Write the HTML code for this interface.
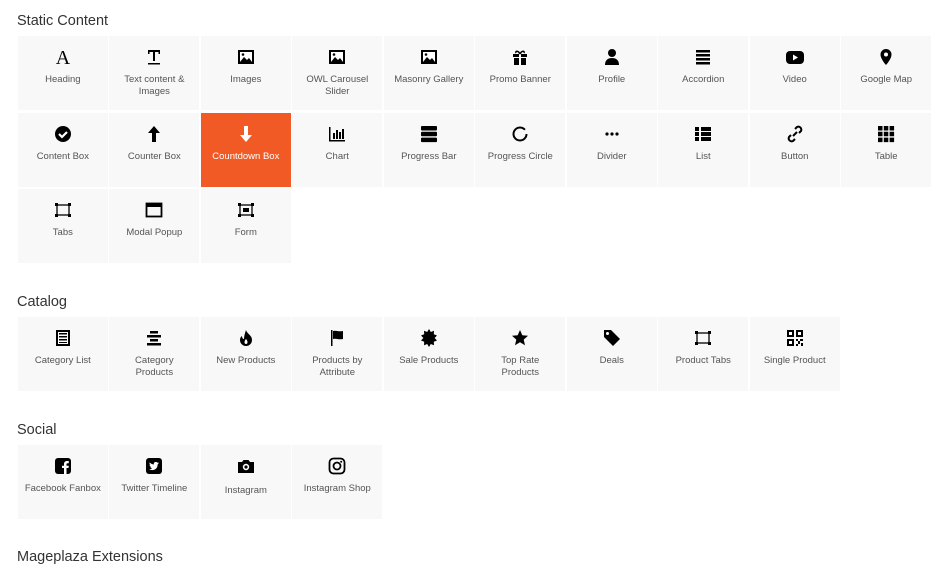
<!DOCTYPE html>
<html><head><style>
*{margin:0;padding:0;box-sizing:border-box}
body{width:945px;height:560px;overflow:hidden;background:#fff;font-family:"Liberation Sans",sans-serif;color:#333;position:relative}
h2{position:absolute;left:17px;font-size:14.5px;font-weight:normal;color:#333}
.grid{position:absolute;left:18px;display:flex;flex-wrap:wrap;width:920px}
.t{width:89.7px;height:74px;background:#f8f8f8;margin:0 1.8px 2.5px 0;text-align:center;font-size:9.5px;line-height:12px;color:#555;padding-top:12px}
.t svg{display:block;margin:0 auto 8px;width:18px;height:18px}
.t.on{background:#f15a24;color:#fff}
</style></head><body>
<h2 style="top:13px">Static Content</h2>
<div class="grid" style="top:36px">
<div class="t"><svg viewBox="0 0 18 18"><text x="9" y="16" font-size="20" font-family="Liberation Serif" text-anchor="middle">A</text></svg>Heading</div>
<div class="t"><svg viewBox="0 0 18 18"><path d="M3 2h12v4h-1.5V4H10v9H8V4H4.5v2H3z M3 15h12v1.5H3z" fill="#000"/></svg>Text content &amp;<br>Images</div>
<div class="t"><svg viewBox="0 0 18 18"><rect x="1" y="2" width="16" height="14" fill="#000"/><rect x="3" y="4" width="12" height="10" fill="#fff"/><path d="M3 14l4-5 3 3 2-2 3 4z" fill="#000"/><circle cx="6" cy="6.5" r="1.3" fill="#000"/></svg>Images</div>
<div class="t"><svg viewBox="0 0 18 18"><rect x="1" y="2" width="16" height="14" fill="#000"/><rect x="3" y="4" width="12" height="10" fill="#fff"/><path d="M3 14l4-5 3 3 2-2 3 4z" fill="#000"/><circle cx="6" cy="6.5" r="1.3" fill="#000"/></svg>OWL Carousel<br>Slider</div>
<div class="t"><svg viewBox="0 0 18 18"><rect x="1" y="2" width="16" height="14" fill="#000"/><rect x="3" y="4" width="12" height="10" fill="#fff"/><path d="M3 14l4-5 3 3 2-2 3 4z" fill="#000"/><circle cx="6" cy="6.5" r="1.3" fill="#000"/></svg>Masonry Gallery</div>
<div class="t"><svg viewBox="0 0 18 18"><path d="M2 6h14v3H2zM3 10h12v7H3z" fill="#000"/><path d="M8 6h2v11H8z" fill="#fff"/><path d="M9 6C7 2 4 3 5 5M9 6c2-4 5-3 4-1" stroke="#000" fill="none" stroke-width="1.5"/></svg>Promo Banner</div>
<div class="t"><svg viewBox="0 0 18 18"><circle cx="9" cy="5" r="4" fill="#000"/><path d="M2 17c0-5 3-7 7-7s7 2 7 7z" fill="#000"/></svg>Profile</div>
<div class="t"><svg viewBox="0 0 18 18"><path d="M2 2h14v2.5H2zM2 6h14v2.5H2zM2 10h14v2.5H2zM2 14h14v2.5H2z" fill="#000"/></svg>Accordion</div>
<div class="t"><svg viewBox="0 0 18 18"><rect x="0" y="3" width="18" height="13" rx="4" fill="#000"/><path d="M7 6.5v6l5-3z" fill="#fff"/></svg>Video</div>
<div class="t"><svg viewBox="0 0 18 18"><path d="M9 1a5.5 5.5 0 0 0-5.5 5.5C3.5 11 9 17 9 17s5.5-6 5.5-10.5A5.5 5.5 0 0 0 9 1z" fill="#000"/><circle cx="9" cy="6.5" r="2" fill="#fff"/></svg>Google Map</div>
<div class="t"><svg viewBox="0 0 18 18"><circle cx="9" cy="9" r="8" fill="#000"/><path d="M5 9l3 3 5-5" stroke="#fff" stroke-width="2.2" fill="none"/></svg>Content Box</div>
<div class="t"><svg viewBox="0 0 18 18"><path d="M9 1l6 7h-4v9H7V8H3z" fill="#000"/></svg>Counter Box</div>
<div class="t on"><svg viewBox="0 0 18 18"><path d="M9 17l6-7h-4V1H7v9H3z" fill="#fff"/></svg>Countdown Box</div>
<div class="t"><svg viewBox="0 0 18 18"><path d="M1 2h1.5v13H17v1.5H1z M5 8h2v6H5zM8 5h2v9H8zM11 7h2v7h-2zM14 4h2v10h-2z" fill="#000"/></svg>Chart</div>
<div class="t"><svg viewBox="0 0 18 18"><rect x="1" y="1" width="16" height="4.5" rx="1" fill="#000"/><rect x="1" y="6.8" width="16" height="4.5" rx="1" fill="#000"/><rect x="1" y="12.6" width="16" height="4.5" rx="1" fill="#000"/></svg>Progress Bar</div>
<div class="t"><svg viewBox="0 0 18 18"><circle cx="9" cy="9" r="6.5" stroke="#000" stroke-width="2" fill="none" stroke-dasharray="36 5"/></svg>Progress Circle</div>
<div class="t"><svg viewBox="0 0 18 18"><circle cx="4" cy="9" r="1.6"/><circle cx="9" cy="9" r="1.6"/><circle cx="14" cy="9" r="1.6"/></svg>Divider</div>
<div class="t"><svg viewBox="0 0 18 18"><path d="M1 2h4v4H1zM7 2h10v4H7zM1 7h4v4H1zM7 7h10v4H7zM1 12h4v4H1zM7 12h10v4H7z" fill="#000"/></svg>List</div>
<div class="t"><svg viewBox="0 0 18 18"><path d="M7 11l4-4M9 4l2-2a3 3 0 0 1 4 4l-2 2M9 14l-2 2a3 3 0 0 1-4-4l2-2" stroke="#000" stroke-width="2" fill="none"/></svg>Button</div>
<div class="t"><svg viewBox="0 0 18 18"><path d="M1 1h4.5v4.5H1zM6.8 1h4.5v4.5H6.8zM12.6 1h4.5v4.5h-4.5zM1 6.8h4.5v4.5H1zM6.8 6.8h4.5v4.5H6.8zM12.6 6.8h4.5v4.5h-4.5zM1 12.6h4.5v4.5H1zM6.8 12.6h4.5v4.5H6.8zM12.6 12.6h4.5v4.5h-4.5z" fill="#000"/></svg>Table</div>
<div class="t"><svg viewBox="0 0 18 18"><rect x="3" y="4" width="12" height="10" stroke="#000" fill="none" stroke-width="1.3"/><rect x="1" y="2" width="3" height="3"/><rect x="14" y="2" width="3" height="3"/><rect x="1" y="13" width="3" height="3"/><rect x="14" y="13" width="3" height="3"/></svg>Tabs</div>
<div class="t"><svg viewBox="0 0 18 18"><rect x="1.5" y="2.5" width="15" height="13" stroke="#000" fill="none" stroke-width="1.8"/><rect x="1.5" y="2.5" width="15" height="3.5"/></svg>Modal Popup</div>
<div class="t"><svg viewBox="0 0 18 18"><rect x="3" y="4" width="12" height="10" stroke="#000" fill="none" stroke-width="1.3"/><rect x="1" y="2" width="3" height="3"/><rect x="14" y="2" width="3" height="3"/><rect x="1" y="13" width="3" height="3"/><rect x="14" y="13" width="3" height="3"/><rect x="6" y="7" width="6" height="4"/></svg>Form</div>
</div>
<h2 style="top:294px">Catalog</h2>
<div class="grid" style="top:317px">
<div class="t"><svg viewBox="0 0 18 18"><rect x="2" y="1" width="14" height="16" fill="#000"/><path d="M4 3h10v12H4z" fill="#fff"/><path d="M5 4h8v1.5H5zM5 7h8v1.5H5zM5 10h8v1.5H5zM5 13h8v1H5z" fill="#000"/></svg>Category List</div>
<div class="t"><svg viewBox="0 0 18 18"><path d="M5 2h8v2.5H5zM2 6h14v2.5H2zM5 10h8v2.5H5zM2 14h14v2.5H2z" fill="#000"/></svg>Category<br>Products</div>
<div class="t"><svg viewBox="0 0 18 18"><path d="M9 1c1 4 6 5 6 10a6 6 0 0 1-12 0c0-3 2-4 2-4 0 2 1 3 2 3C7 7 8 4 9 1z" fill="#000"/><path d="M9 10c2 2 2 5 0 5s-2-3 0-5z" fill="#fff"/></svg>New Products</div>
<div class="t"><svg viewBox="0 0 18 18"><path d="M3 1h1.5v16H3zM5 2c3-1 5 1 10 0v8c-5 1-7-1-10 0z" fill="#000"/></svg>Products by<br>Attribute</div>
<div class="t"><svg viewBox="0 0 18 18"><path d="M9 0l1.8 3 3.2-1.3-.2 3.5 3.2 1.3-2.4 2.5 2.4 2.5-3.2 1.3.2 3.5-3.2-1.3L9 18l-1.8-3-3.2 1.3.2-3.5L1 11.5 3.4 9 1 6.5l3.2-1.3L4 1.7l3.2 1.3z" fill="#000"/></svg>Sale Products</div>
<div class="t"><svg viewBox="0 0 18 18"><path d="M9 1l2.3 5.3 5.7.5-4.3 3.8 1.3 5.6L9 13.3 4 16.2l1.3-5.6L1 6.8l5.7-.5z" fill="#000"/></svg>Top Rate<br>Products</div>
<div class="t"><svg viewBox="0 0 18 18"><path d="M1 1h7l9 9-7 7-9-9z" fill="#000"/><circle cx="4.5" cy="4.5" r="1.5" fill="#fff"/></svg>Deals</div>
<div class="t"><svg viewBox="0 0 18 18"><rect x="3" y="4" width="12" height="10" stroke="#000" fill="none" stroke-width="1.3"/><rect x="1" y="2" width="3" height="3"/><rect x="14" y="2" width="3" height="3"/><rect x="1" y="13" width="3" height="3"/><rect x="14" y="13" width="3" height="3"/></svg>Product Tabs</div>
<div class="t"><svg viewBox="0 0 18 18"><path d="M1 1h7v7H1zM10 1h7v7h-7zM1 10h7v7H1z" fill="#000"/><path d="M3 3h3v3H3zM12 3h3v3h-3zM3 12h3v3H3z" fill="#fff"/><path d="M10 10h2v2h-2zM14 10h3v2h-3zM12 12h2v3h-2zM10 15h2v2h-2zM15 14h2v3h-2z" fill="#000"/></svg>Single Product</div>
</div>
<h2 style="top:422px">Social</h2>
<div class="grid" style="top:445px">
<div class="t"><svg viewBox="0 0 18 18"><rect x="1" y="1" width="16" height="16" rx="3" fill="#000"/><path d="M12.5 17v-6h2l.3-2.3h-2.3V7.3c0-.7.2-1.1 1.1-1.1h1.2V4.1c-.2 0-1-.1-1.8-.1-1.8 0-3 1.1-3 3.1v1.6h-2V11h2v6z" fill="#fff"/></svg>Facebook Fanbox</div>
<div class="t"><svg viewBox="0 0 18 18"><rect x="1" y="1" width="16" height="16" rx="3" fill="#000"/><path d="M14 6c-.4.2-.8.3-1.2.3.4-.3.8-.7.9-1.1-.4.2-.9.4-1.3.5a2 2 0 0 0-3.5 1.8C7.2 7.4 5.7 6.6 4.7 5.4c-.5 1 0 2 .7 2.6-.3 0-.6-.1-.9-.2 0 1 .7 1.8 1.6 2-.3.1-.6.1-.9 0 .3.8 1 1.4 1.9 1.4-.9.7-2 1-3.1.9 3.7 2.3 8.7.4 8.6-4.6.4-.3.8-.7 1.1-1.1z" fill="#fff"/></svg>Twitter Timeline</div>
<div class="t"><svg viewBox="0 0 18 18" style="margin-bottom:10px"><path d="M1 5h4l1.5-2h5L13 5h4v11H1z" fill="#000"/><circle cx="9" cy="10" r="3.2" fill="#fff"/><circle cx="9" cy="10" r="1.6" fill="#000"/></svg>Instagram</div>
<div class="t"><svg viewBox="0 0 18 18"><rect x="1.5" y="1.5" width="15" height="15" rx="4" stroke="#000" stroke-width="1.8" fill="none"/><circle cx="9" cy="9" r="3.5" stroke="#000" stroke-width="1.8" fill="none"/><circle cx="13.2" cy="4.8" r="1"/></svg>Instagram Shop</div>
</div>
<h2 style="top:549px">Mageplaza Extensions</h2>
</body></html>
